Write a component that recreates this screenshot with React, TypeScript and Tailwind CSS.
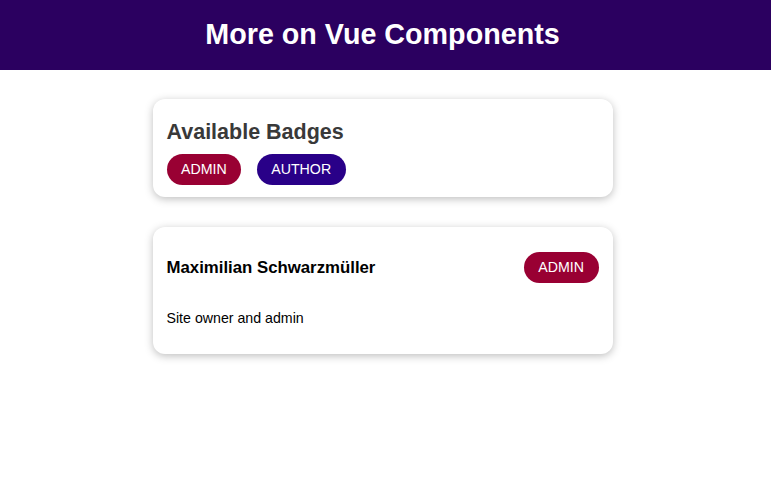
import React from "react";

type Role = "admin" | "author";

function Badge({ type }: { type: Role }) {
  const color = type === "admin" ? "bg-[#990033]" : "bg-[#290088]";
  return (
    <span
      className={`${color} inline-flex h-[31px] items-center rounded-full px-[14.5px] text-[14.2px] uppercase text-white`}
    >
      {type}
    </span>
  );
}

function Card({ children, className = "" }: { children: React.ReactNode; className?: string }) {
  return (
    <section
      className={`mx-auto w-[460px] rounded-[12px] bg-white px-[14px] shadow-[0_2px_8px_rgba(0,0,0,0.26)] ${className}`}
    >
      {children}
    </section>
  );
}

export default function App() {
  return (
    <div className="min-h-[493px] bg-white font-['Liberation_Sans',Arial,sans-serif]">
      <header className="flex h-[70px] w-full bg-[#2b0060]">
        <h1 className="flex w-[765px] items-center justify-center text-[28.7px] font-bold text-white">
          More on Vue Components
        </h1>
      </header>

      <main className="w-[765px] pt-[29px]">
        {/* badges overview */}
        <Card className="pt-[21px] pb-[12px]">
          <h2 className="mb-[9.5px] text-[21.5px] font-bold leading-[24.6px] text-[#393939]">
            Available Badges
          </h2>
          <div className="flex gap-[15.5px]">
            <Badge type="admin" />
            <Badge type="author" />
          </div>
        </Card>

        {/* user info */}
        <Card className="mt-[30px] py-[14px]">
          <div className="flex items-center justify-between">
            <h3 className="my-[17px] text-[16.8px] font-bold leading-[19.2px] text-black">
              Maximilian Schwarzmüller
            </h3>
            <Badge type="admin" />
          </div>
          <p className="mt-[16px] mb-[13px] text-[14.2px] leading-[16.3px] text-black">Site owner and admin</p>
        </Card>
      </main>
    </div>
  );
}
